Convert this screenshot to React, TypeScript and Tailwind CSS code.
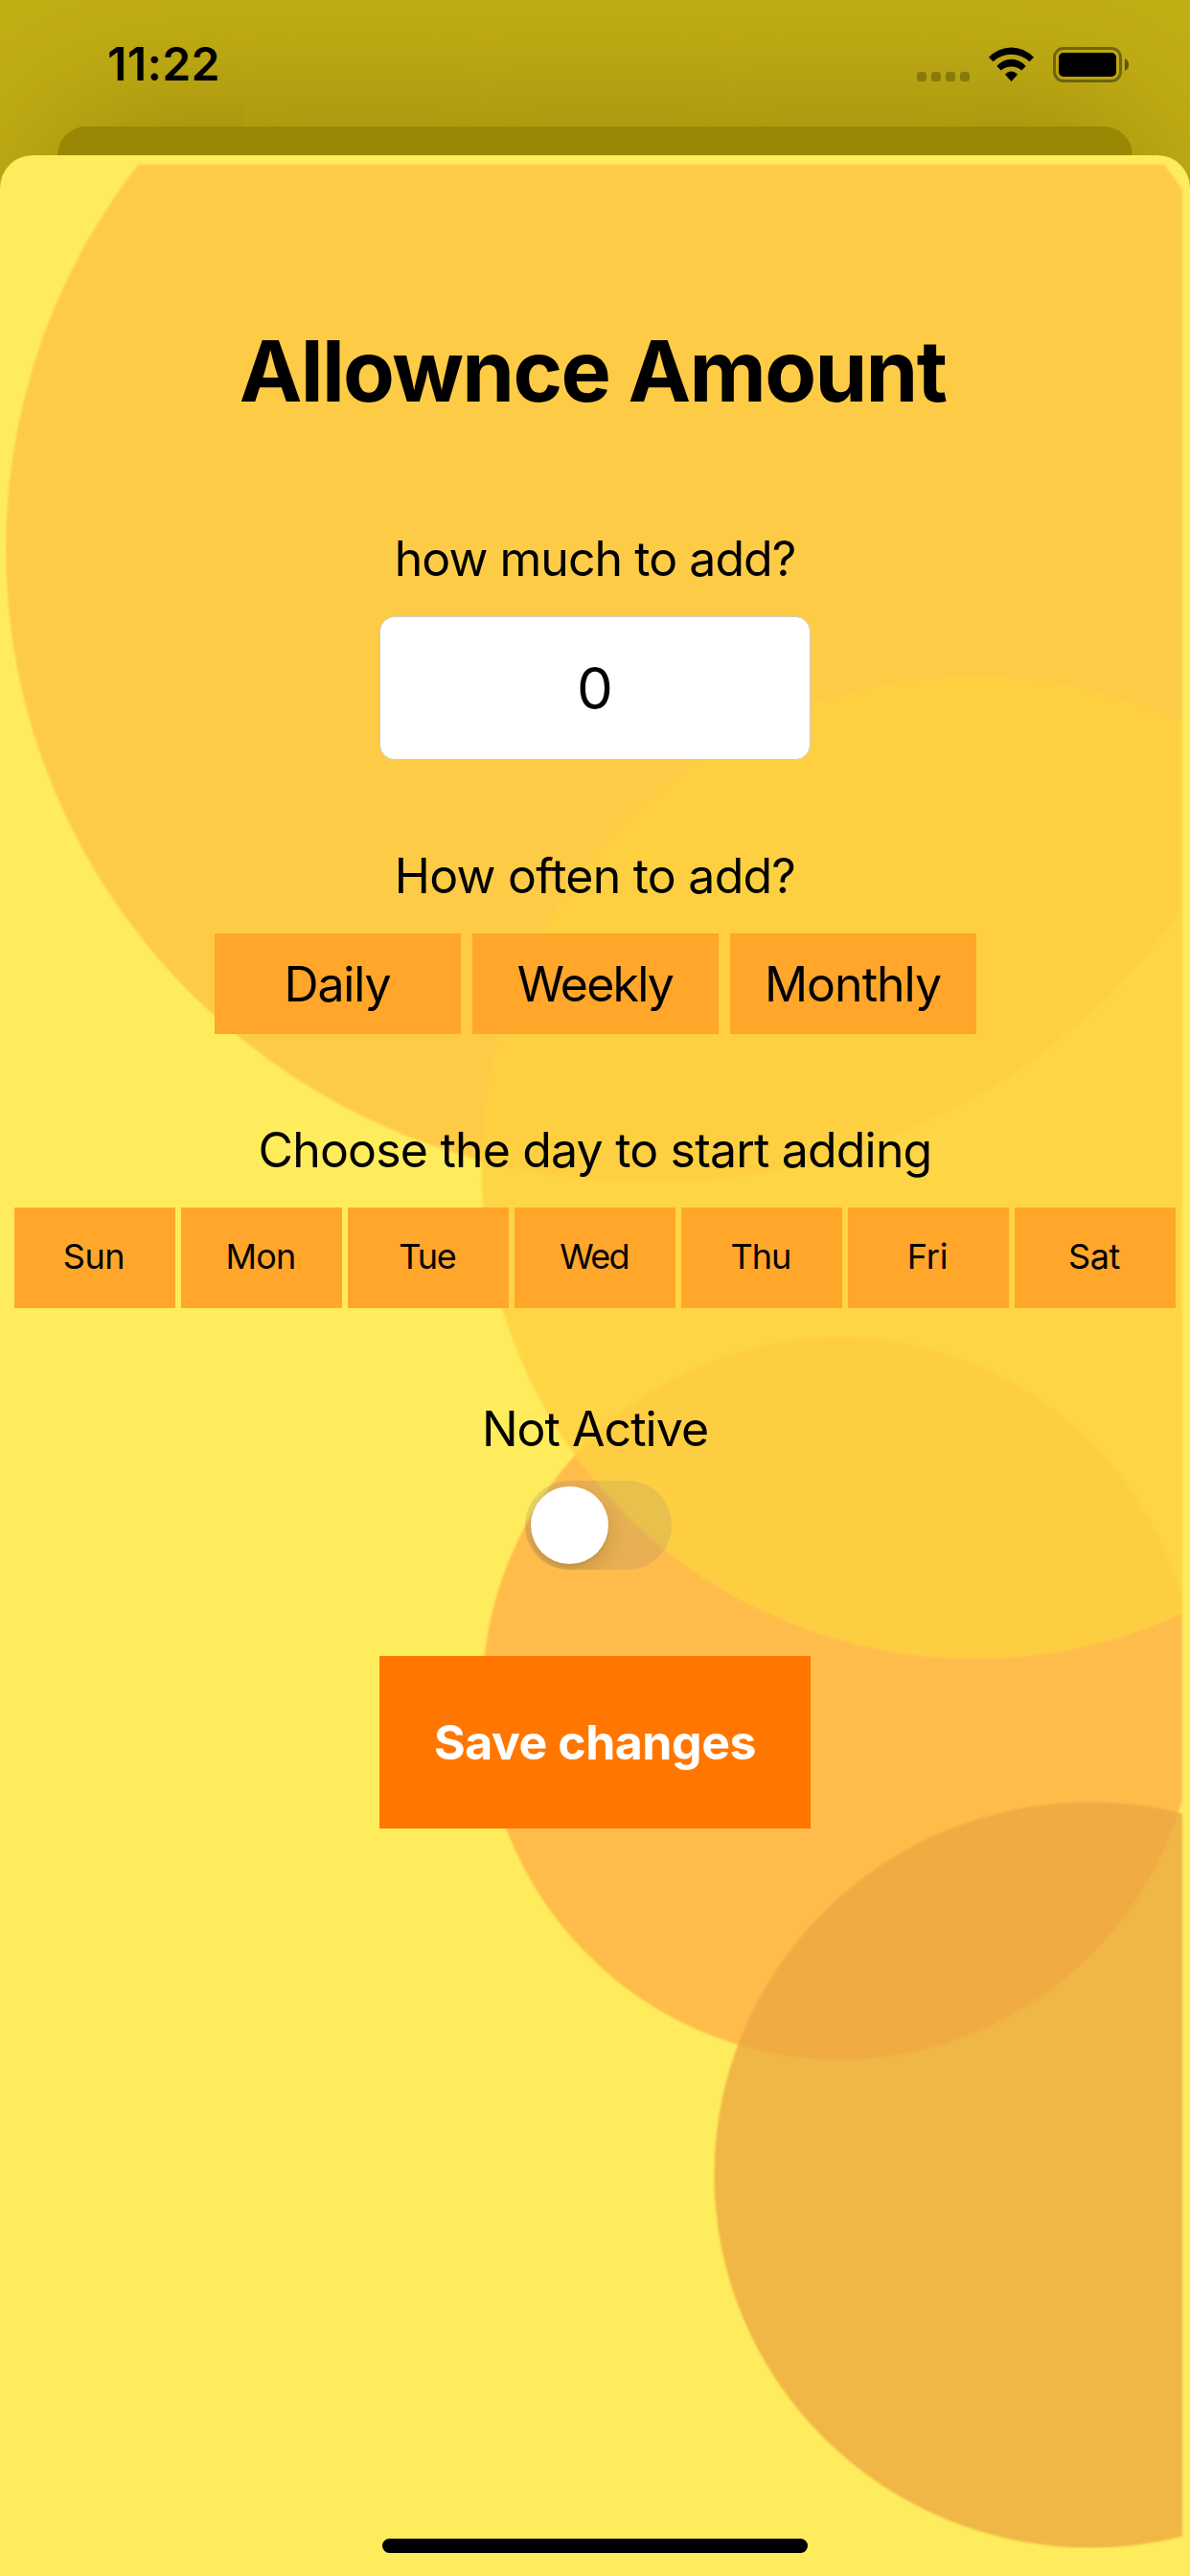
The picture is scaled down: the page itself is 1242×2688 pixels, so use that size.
const FREQUENCIES = [
  { label: "Daily", tracking: "tracking-[-1.16px]" },
  { label: "Weekly", tracking: "tracking-[-1.76px]" },
  { label: "Monthly", tracking: "tracking-[-1px]" },
];

const DAYS = [
  { label: "Sun", tracking: "tracking-[-0.4px]" },
  { label: "Mon", tracking: "tracking-[-0.8px]" },
  { label: "Tue", tracking: "tracking-[-1.2px]" },
  { label: "Wed", tracking: "tracking-[-1.8px]" },
  { label: "Thu", tracking: "tracking-[-1px]" },
  { label: "Fri", tracking: "tracking-[-0.2px]" },
  { label: "Sat", tracking: "tracking-[-0.4px]" },
];

function WifiIcon() {
  return (
    <svg width="49" height="37" viewBox="0 0 49 37" aria-hidden="true">
      <path d="M1 10.8A31.8 31.8 0 0 1 48 10.8L43.6 15.3A28 28 0 0 0 5.4 15.3Z" />
      <path d="M9.3 20A19.5 19.5 0 0 1 39.7 20L35.3 24.4A16.6 16.6 0 0 0 13.7 24.4Z" />
      <path d="M18 28.8A8.2 8.2 0 0 1 31 28.8L24.5 36Z" />
    </svg>
  );
}

function BatteryIcon() {
  return (
    <svg width="80" height="37" viewBox="0 0 80 37" aria-hidden="true">
      <rect x="1.5" y="1.5" width="69" height="34" rx="9.5" fill="none" stroke="#000" strokeOpacity="0.4" strokeWidth="3" />
      <rect x="6" y="6" width="60" height="25" rx="5" />
      <path d="M75 12Q79 14 79 18.5T75 25Z" fillOpacity="0.5" />
    </svg>
  );
}

function StatusBar() {
  return (
    <header className="relative z-10 flex h-[132px] items-start justify-between pl-[112px] pr-[63px]">
      <time className="mt-[37px] text-[48px] font-semibold leading-[60px] tracking-[0.45px]">11:22</time>
      <div className="mt-[49px] flex items-start">
        <div className="mt-[26px] mr-[19px] flex gap-[5px]">
          <span className="size-[10px] rounded-[3px] bg-black/25" />
          <span className="size-[10px] rounded-[3px] bg-black/25" />
          <span className="size-[10px] rounded-[3px] bg-black/25" />
          <span className="size-[10px] rounded-[3px] bg-black/25" />
        </div>
        <WifiIcon />
        <div className="ml-[19px]">
          <BatteryIcon />
        </div>
      </div>
    </header>
  );
}

function Backdrop() {
  return (
    <svg className="absolute inset-0 -z-10" width="1242" height="2526" viewBox="0 162 1242 2526" aria-hidden="true">
      <defs>
        <clipPath id="frame">
          <rect x="0" y="171.5" width="1234" height="2510" />
        </clipPath>
        <filter id="soften" x="0" y="0" width="1" height="1" colorInterpolationFilters="sRGB">
          <feGaussianBlur stdDeviation="0.9" />
        </filter>
      </defs>
      <g filter="url(#soften)">
        <g clipPath="url(#frame)">
          <ellipse cx="679.5" cy="573" rx="673.5" ry="661.5" fill="#fecb47" />
          <ellipse cx="876" cy="1772" rx="373" ry="377" fill="#ffbc4b" />
          <ellipse cx="1017.5" cy="1218.5" rx="515" ry="512.5" fill="#fed141" fillOpacity="0.85" />
          <ellipse cx="1138" cy="2269.5" rx="392.5" ry="389" fill="#eba540" fillOpacity="0.77" />
        </g>
      </g>
    </svg>
  );
}

export default function App() {
  return (
    <div className="flex h-[2688px] w-[1242px] flex-col overflow-hidden bg-[#c3af15] font-['Inter','Liberation_Sans',sans-serif] text-black">
      <StatusBar />
      <div className="mx-[60px] -mb-[370px] h-[400px] shrink-0 rounded-t-[30px] bg-[#9a8703] shadow-[0_0_180px_rgba(120,100,0,0.62)]" />

      <main className="relative isolate flex flex-1 flex-col items-center overflow-hidden rounded-t-[34px] bg-[#ffec5d] pt-[172px]">
        <Backdrop />

        <h1 className="mr-[5px] text-[88px] font-bold leading-[106px] tracking-[-1.67px]">Allownce Amount</h1>

        <label htmlFor="amount" className="mt-[113px] text-[50px] leading-[60px] tracking-[-0.96px]">
          how much to add?
        </label>
        <input
          id="amount"
          defaultValue="0"
          className="mt-[30px] h-[150px] w-[450px] rounded-[16px] border border-[#cccccc] bg-white text-center text-[60px] outline-none"
        />

        <p className="mt-[91px] text-[50px] leading-[60px] tracking-[-0.77px]">How often to add?</p>
        <div className="mt-[30px] flex gap-[12px]">
          {FREQUENCIES.map(({ label, tracking }) => (
            <button key={label} className={`h-[105px] w-[257px] bg-[#ffa62b] text-[50px] leading-[60px] ${tracking}`}>
              {label}
            </button>
          ))}
        </div>

        <p className="mt-[91px] text-[50px] leading-[60px] tracking-[-0.82px]">Choose the day to start adding</p>
        <div className="mt-[30px] flex gap-[6px]">
          {DAYS.map(({ label, tracking }) => (
            <button key={label} className={`h-[105px] w-[168px] bg-[#ffa62b] pr-[2px] pb-[3px] text-[36px] leading-[44px] ${tracking}`}>
              {label}
            </button>
          ))}
        </div>

        <p className="mt-[96px] text-[50px] leading-[60px] tracking-[-0.97px]">Not Active</p>
        <button
          role="switch"
          aria-checked="false"
          aria-label="Active"
          className="mt-[24px] ml-[7px] flex h-[93px] w-[153px] items-center overflow-hidden rounded-full bg-[#787880]/16 pl-[6px]"
        >
          <span className="size-[81px] rounded-full bg-white shadow-[0_9px_24px_rgba(0,0,0,0.15),0_3px_3px_rgba(0,0,0,0.06)]" />
        </button>

        <button className="mt-[90px] h-[180px] w-[450px] bg-[#ff7700] text-[50px] font-bold leading-[60px] tracking-[-0.48px] text-white">
          Save changes
        </button>

        <div className="mt-auto mb-[24px] h-[15px] w-[444px] rounded-full bg-black" />
      </main>
    </div>
  );
}
